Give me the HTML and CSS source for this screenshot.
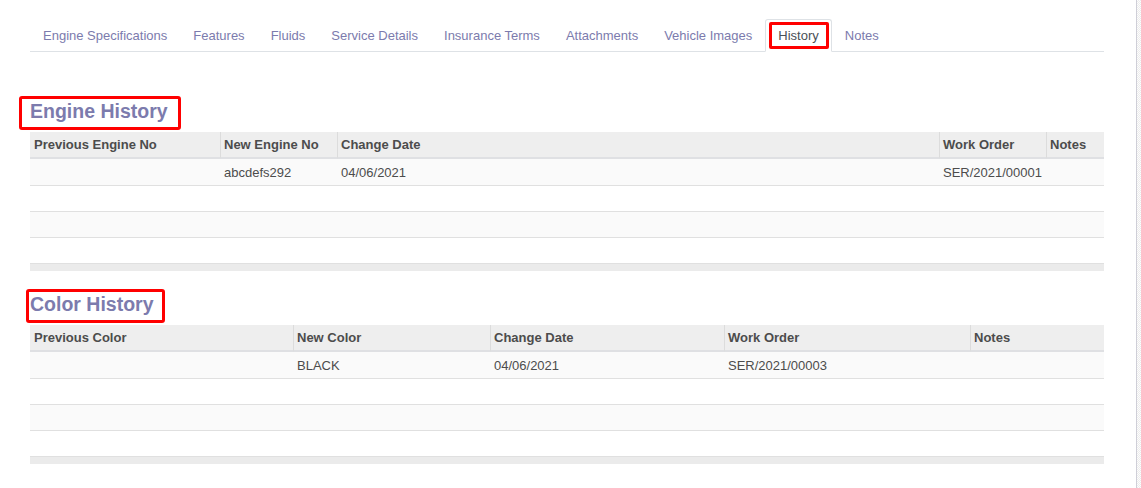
FILE: index.html
```html
<!DOCTYPE html>
<html lang="en">
<head>
<meta charset="utf-8">
<title>History</title>
<link rel="stylesheet" href="styles.css">
</head>
<body>
<div class="page">
  <nav class="tabs">
    <a class="tab">Engine Specifications</a>
    <a class="tab">Features</a>
    <a class="tab">Fluids</a>
    <a class="tab">Service Details</a>
    <a class="tab">Insurance Terms</a>
    <a class="tab">Attachments</a>
    <a class="tab">Vehicle Images</a>
    <a class="tab active">History<span class="mark"></span></a>
    <a class="tab">Notes</a>
  </nav>

  <h2 class="section-title engine-title">Engine History</h2>
  <table class="grid">
    <colgroup>
      <col class="e1"><col class="e2"><col class="e3"><col class="e4"><col class="e5">
    </colgroup>
    <thead>
      <tr><th>Previous Engine No</th><th>New Engine No</th><th>Change Date</th><th>Work Order</th><th>Notes</th></tr>
    </thead>
    <tbody>
      <tr class="first"><td></td><td>abcdefs292</td><td>04/06/2021</td><td>SER/2021/00001</td><td></td></tr>
      <tr><td></td><td></td><td></td><td></td><td></td></tr>
      <tr><td></td><td></td><td></td><td></td><td></td></tr>
      <tr><td></td><td></td><td></td><td></td><td></td></tr>
    </tbody>
    <tfoot>
      <tr><td></td><td></td><td></td><td></td><td></td></tr>
    </tfoot>
  </table>

  <h2 class="section-title color-title">Color History</h2>
  <table class="grid">
    <colgroup>
      <col class="c1"><col class="c2"><col class="c3"><col class="c4"><col class="c5">
    </colgroup>
    <thead>
      <tr><th>Previous Color</th><th>New Color</th><th>Change Date</th><th>Work Order</th><th>Notes</th></tr>
    </thead>
    <tbody>
      <tr class="first"><td></td><td>BLACK</td><td>04/06/2021</td><td>SER/2021/00003</td><td></td></tr>
      <tr><td></td><td></td><td></td><td></td><td></td></tr>
      <tr><td></td><td></td><td></td><td></td><td></td></tr>
      <tr><td></td><td></td><td></td><td></td><td></td></tr>
    </tbody>
    <tfoot>
      <tr><td></td><td></td><td></td><td></td><td></td></tr>
    </tfoot>
  </table>
</div>
<div class="edge"></div>
</body>
</html>
```
FILE: styles.css
```css
html, body {
  margin: 0;
  background: #fff;
}
body {
  font-family: "Liberation Sans", Arial, sans-serif;
  font-size: 13px;
  color: #4c4c4c;
}
.page {
  width: 1074px;
  padding: 19px 0 0 30px;
}

/* tabs */
.tabs {
  display: flex;
  border-bottom: 1px solid #dee2e6;
}
.tab {
  position: relative;
  display: block;
  padding: 8px 12px 7px;
  line-height: 16px;
  border: 1px solid transparent;
  margin-bottom: -1px;
  color: #7c7bad;
  white-space: nowrap;
}
.tab.active {
  color: #495057;
  background: #fff;
  border-color: #dee2e6 #dee2e6 #fff;
  border-radius: 3px 3px 0 0;
}
.mark {
  position: absolute;
  top: 2px;
  left: 3px;
  right: 2px;
  bottom: 2px;
  border: 3px solid #f00;
  border-radius: 2px;
}

/* section headings */
.section-title {
  display: inline-block;
  margin: 0;
  font-size: 19.5px;
  line-height: 22px;
  font-weight: bold;
  color: #7c7bad;
  border: 3px solid #f00;
  border-radius: 3px;
}
.engine-title {
  margin: 44px 0 2px -11px;
  padding: 1px 10px 5px 8px;
}
.color-title {
  margin: 18px 0 2px -4px;
  padding: 1px 8px 5px 1px;
}

/* tables */
.grid {
  width: 1074px;
  table-layout: fixed;
  border-collapse: separate;
  border-spacing: 0;
}
.grid th {
  height: 25px;
  padding: 0 3px;
  text-align: left;
  font-weight: bold;
  background: #eeeeee;
  border-left: 1px solid #dcdcdc;
  border-bottom: 2px solid #dfe0e3;
  white-space: nowrap;
  overflow: hidden;
}
.grid th:first-child {
  border-left: none;
  padding-left: 4px;
}
.grid td {
  height: 25px;
  padding: 0 4px;
  border-bottom: 1px solid #e0e0e0;
  white-space: nowrap;
}
.grid tbody tr.first td {
  height: 26px;
}
.grid tbody tr:nth-child(odd) td {
  background: #fafafa;
}
.grid tfoot td {
  height: 7px;
  padding: 0;
  border: none;
  background: #ebebeb;
}

.e1 { width: 190px; }
.e2 { width: 117px; }
.e3 { width: 602px; }
.e4 { width: 107px; }
.e5 { width: 58px; }
.c1 { width: 263px; }
.c2 { width: 197px; }
.c3 { width: 234px; }
.c4 { width: 246px; }
.c5 { width: 134px; }

.edge {
  position: fixed;
  top: 0;
  right: 0;
  bottom: 0;
  width: 4px;
  border-left: 1px solid #cfcfd8;
  background: repeating-conic-gradient(#ececec 0 25%, #fdfdfd 0 50%) 0 0 / 2px 2px;
}
```
